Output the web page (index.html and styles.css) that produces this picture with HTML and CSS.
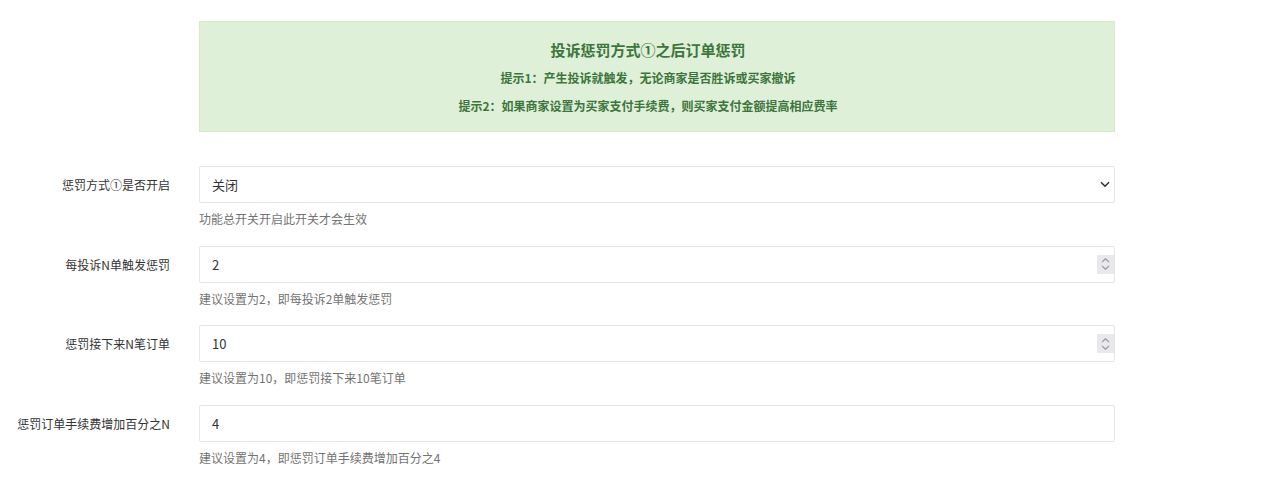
FILE: index.html
```html
<!DOCTYPE html>
<html lang="zh-CN">
<head>
  <meta charset="UTF-8" />
  <meta name="viewport" content="width=device-width, initial-scale=1.0" />
  <title>投诉惩罚方式①</title>
  <link rel="stylesheet" href="styles.css">
</head>
<body>

  <div class="page">
    <div class="alert-box">
      <h3>投诉惩罚方式①之后订单惩罚</h3>
      <p>提示1：产生投诉就触发，无论商家是否胜诉或买家撤诉</p>
      <p>提示2：如果商家设置为买家支付手续费，则买家支付金额提高相应费率</p>
    </div>

    <form class="form-horizontal">
      <div class="form-row">
        <label for="open">惩罚方式①是否开启</label>
        <div class="field">
          <div class="select-wrap">
            <select id="open" class="form-control">
              <option selected>关闭</option>
              <option>开启</option>
            </select>
            <svg class="caret" width="10" height="7" viewBox="0 0 10 7"><path d="M1 1.2 L5 5.2 L9 1.2" fill="none" stroke="#333" stroke-width="1.6"/></svg>
          </div>
          <p class="help">功能总开关开启此开关才会生效</p>
        </div>
      </div>

      <div class="form-row">
        <label for="num">每投诉N单触发惩罚</label>
        <div class="field">
          <div class="spin-wrap">
            <input id="num" type="text" class="form-control" value="2">
            <span class="spin"><svg width="9" height="14" viewBox="0 0 9 14"><path d="M1 5 L4.5 1.8 L8 5 M1 9 L4.5 12.2 L8 9" fill="none" stroke="#999" stroke-width="1.1"/></svg></span>
          </div>
          <p class="help">建议设置为2，即每投诉2单触发惩罚</p>
        </div>
      </div>

      <div class="form-row">
        <label for="next">惩罚接下来N笔订单</label>
        <div class="field">
          <div class="spin-wrap">
            <input id="next" type="text" class="form-control" value="10">
            <span class="spin"><svg width="9" height="14" viewBox="0 0 9 14"><path d="M1 5 L4.5 1.8 L8 5 M1 9 L4.5 12.2 L8 9" fill="none" stroke="#999" stroke-width="1.1"/></svg></span>
          </div>
          <p class="help">建议设置为10，即惩罚接下来10笔订单</p>
        </div>
      </div>

      <div class="form-row">
        <label for="rate">惩罚订单手续费增加百分之N</label>
        <div class="field">
          <input id="rate" type="text" class="form-control" value="4">
          <p class="help">建议设置为4，即惩罚订单手续费增加百分之4</p>
        </div>
      </div>
    </form>
  </div>

</body>
</html>
```

FILE: styles.css
```css
* {
  box-sizing: border-box;
  margin: 0;
  padding: 0;
}

body {
  background: #ffffff;
  font-family: "Noto Sans CJK SC", "Liberation Sans", sans-serif;
  color: #333;
  font-size: 12px;
}

.page {
  width: 1115px;
  padding-top: 21px;
}

.alert-box {
  margin-left: 199px;
  height: 111px;
  background: #dff0d8;
  border: 1px solid #d6e9c6;
  color: #3c763d;
  text-align: center;
  padding: 17px 18px 0 0;
}

.alert-box h3 {
  font-size: 15px;
  font-weight: bold;
  line-height: 22px;
  margin-bottom: 8px;
}

.alert-box p {
  font-size: 12px;
  font-weight: bold;
  line-height: 18px;
  margin-bottom: 10px;
}

.form-horizontal {
  margin-top: 34px;
}

.form-row {
  display: flex;
  height: 79.7px;
}

.form-row label {
  width: 199px;
  padding-right: 29px;
  text-align: right;
  font-size: 12px;
  line-height: 37px;
  color: #333;
}

.field {
  flex: 1;
}

.form-control {
  display: block;
  width: 100%;
  height: 37px;
  border: 1px solid #e5e6e7;
  border-radius: 2px;
  padding: 0 12px;
  font-family: inherit;
  font-size: 13px;
  color: #333;
  background: #fff;
  outline: none;
}

.select-wrap, .spin-wrap {
  position: relative;
}

select.form-control {
  appearance: none;
  -webkit-appearance: none;
}

.caret {
  position: absolute;
  right: 5px;
  top: 15px;
}

.spin {
  position: absolute;
  right: 1px;
  top: 9px;
  width: 17px;
  height: 19px;
  background: #e9e9ed;
  display: flex;
  align-items: center;
  justify-content: center;
}

.help {
  font-size: 12px;
  color: #737373;
  line-height: 18px;
  margin-top: 7px;
}
```
